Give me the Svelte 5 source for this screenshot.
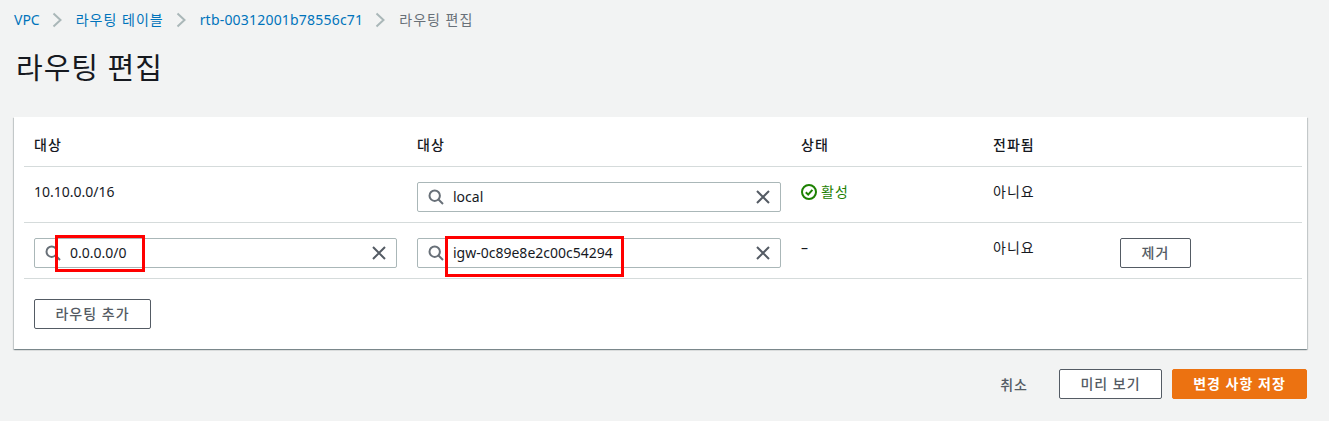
<script>
  const crumbs = [
    { label: '라우팅 테이블', cls: 'ko' },
    { label: 'rtb-00312001b78556c71', cls: 'rtb' }
  ];
</script>

{#snippet chevron()}
  <svg class="chevron" viewBox="0 0 10 16" width="10" height="16">
    <path d="M1.5 1.5 L8.5 8 L1.5 14.5" />
  </svg>
{/snippet}

{#snippet search()}
  <svg class="icon-search" viewBox="0 0 16 16" width="16" height="16">
    <circle cx="6.7" cy="6.7" r="5.2" />
    <path d="M10.5 10.5 L15 15" />
  </svg>
{/snippet}

{#snippet clear()}
  <svg class="icon-clear" viewBox="0 0 14 14" width="14" height="14">
    <path d="M1 1 L13 13 M13 1 L1 13" />
  </svg>
{/snippet}

<div class="page">
  <nav class="breadcrumb">
    <a href="#top">VPC</a>
    {@render chevron()}
    {#each crumbs as crumb}
      <a href="#top" class={crumb.cls}>{crumb.label}</a>
      {@render chevron()}
    {/each}
    <span class="current ko">라우팅 편집</span>
  </nav>

  <h1>라우팅 편집</h1>

  <section class="card">
    <div class="table">
      <div class="row head">
        <div class="cell ko">대상</div>
        <div class="cell ko">대상</div>
        <div class="cell ko">상태</div>
        <div class="cell ko">전파됨</div>
        <div class="cell"></div>
      </div>

      <div class="row">
        <div class="cell text">10.10.0.0/16</div>
        <div class="cell">
          <div class="input">
            {@render search()}
            <span class="value">local</span>
            {@render clear()}
          </div>
        </div>
        <div class="cell text status">
          <svg class="icon-ok" viewBox="0 0 16 16" width="16" height="16">
            <circle cx="8" cy="8" r="7" />
            <path d="M4.8 8.2 L7.2 10.6 L11.4 5.8" />
          </svg>
          <span class="ko">활성</span>
        </div>
        <div class="cell text ko">아니요</div>
        <div class="cell"></div>
      </div>

      <div class="row">
        <div class="cell">
          <div class="input">
            {@render search()}
            <span class="value">0.0.0.0/0</span>
            {@render clear()}
            <span class="mark mark-cidr"></span>
          </div>
        </div>
        <div class="cell">
          <div class="input">
            {@render search()}
            <span class="value">igw-0c89e8e2c00c54294</span>
            {@render clear()}
            <span class="mark mark-igw"></span>
          </div>
        </div>
        <div class="cell text">–</div>
        <div class="cell text ko">아니요</div>
        <div class="cell">
          <button class="btn remove ko">제거</button>
        </div>
      </div>
    </div>

    <div class="add">
      <button class="btn add-route ko">라우팅 추가</button>
    </div>
  </section>

  <footer class="actions">
    <button class="cancel ko">취소</button>
    <button class="btn preview ko">미리 보기</button>
    <button class="btn primary ko">변경 사항 저장</button>
  </footer>
</div>

<style>
  :global(body) {
    background: #f2f3f3;
  }

  .page {
    height: 421px;
    box-sizing: border-box;
    padding: 0 22px 0 14px;
    background: #f2f3f3;
    color: #16191f;
    font-family: "Noto Sans", "Noto Sans CJK KR", sans-serif;
    font-size: 14px;
    line-height: 20px;
    overflow: hidden;
  }

  .ko {
    letter-spacing: 1px;
  }

  .rtb {
    letter-spacing: 0.2px;
  }

  .breadcrumb {
    display: flex;
    align-items: center;
    height: 20px;
    padding-top: 10px;
  }

  .breadcrumb a {
    color: #0073bb;
    text-decoration: none;
  }

  .current {
    color: #687078;
  }

  .chevron {
    margin: 0 14px 0 12px;
  }

  .chevron path {
    fill: none;
    stroke: #aab7b8;
    stroke-width: 2;
  }

  h1 {
    margin: 18px 0 0 2px;
    height: 40px;
    font-size: 29px;
    line-height: 40px;
    font-weight: 400;
    letter-spacing: 1px;
    color: #16191f;
  }

  .card {
    margin-top: 29px;
    height: 232px;
    box-sizing: border-box;
    padding: 0 5px 0 10px;
    background: #fff;
    box-shadow: 0 1px 1px 0 rgba(0, 28, 36, 0.3), 1px 1px 1px 0 rgba(0, 28, 36, 0.15), -1px 1px 1px 0 rgba(0, 28, 36, 0.15);
  }

  .row {
    display: grid;
    grid-template-columns: 383px 384px 192px 127px 192px;
    height: 56px;
    box-sizing: border-box;
    border-bottom: 1px solid #d5dbdb;
  }

  .row.head {
    height: 50px;
    font-weight: 500;
  }

  .cell {
    padding: 15px 10px 0;
    min-width: 0;
  }

  .row.head .cell {
    padding-top: 18px;
  }

  .cell.text {
    padding-top: 15px;
  }

  .status {
    display: flex;
    align-items: flex-start;
    gap: 4px;
    color: #1d8102;
  }

  .icon-ok {
    margin-top: 2px;
  }

  .icon-ok circle,
  .icon-ok path {
    fill: none;
    stroke: #1d8102;
    stroke-width: 2;
  }

  .input {
    position: relative;
    display: flex;
    align-items: center;
    height: 30px;
    box-sizing: border-box;
    padding: 0 10px;
    border: 1px solid #aab7b8;
    border-radius: 2px;
    background: #fff;
  }

  .value {
    flex: 1;
    margin-left: 9px;
  }

  .icon-search circle,
  .icon-search path {
    fill: none;
    stroke: #687078;
    stroke-width: 2;
  }

  .icon-clear path {
    fill: none;
    stroke: #545b64;
    stroke-width: 2;
  }

  .mark {
    position: absolute;
    box-sizing: border-box;
    border: 3px solid #ff0000;
    pointer-events: none;
  }

  .mark-cidr {
    left: 20px;
    top: -4px;
    width: 90px;
    height: 37px;
  }

  .mark-igw {
    left: 27px;
    top: -3px;
    width: 179px;
    height: 41px;
  }

  .btn {
    height: 30px;
    box-sizing: border-box;
    padding: 0;
    border: 1px solid #545b64;
    border-radius: 2px;
    background: #fff;
    color: #545b64;
    font-family: inherit;
    font-size: 14px;
    font-weight: 500;
    line-height: 20px;
  }

  .remove {
    width: 71px;
  }

  .add {
    padding: 20px 10px 0;
  }

  .add-route {
    width: 117px;
  }

  .actions {
    display: flex;
    justify-content: flex-end;
    align-items: center;
    margin-top: 20px;
  }

  .cancel {
    margin-right: 31px;
    padding: 0;
    border: 0;
    background: none;
    color: #545b64;
    font-family: inherit;
    font-size: 14px;
    font-weight: 500;
  }

  .preview {
    width: 103px;
    margin-right: 10px;
  }

  .primary {
    width: 135px;
    border-color: #ec7211;
    background: #ec7211;
    color: #fff;
    font-weight: 700;
  }
</style>
